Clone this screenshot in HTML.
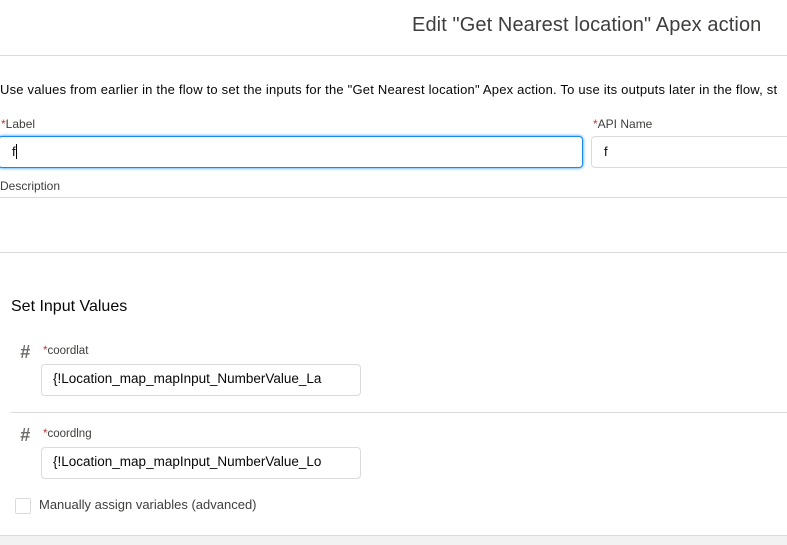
<!DOCTYPE html>
<html><head><style>
body{margin:0;width:787px;height:544px;overflow:hidden;background:#fff;font-family:"Liberation Sans",sans-serif;color:#16325c;position:relative}
.a{position:absolute;white-space:nowrap}
.in{position:absolute;border:1px solid #dddbda;border-radius:4px;background:#fff;box-sizing:border-box}
.lab{font-size:12px;color:#3e3e3c}
.r{color:#c23934}
</style></head><body>
<div class="a" style="left:412px;top:14px;font-size:20px;color:#3e3e3c;letter-spacing:0.1px">Edit "Get Nearest location" Apex action</div>
<div class="a" style="left:0;top:55px;width:787px;height:1px;background:#dddbda"></div>
<div class="a" style="left:0;top:82px;font-size:13px;color:#080707;letter-spacing:0.2px">Use values from earlier in the flow to set the inputs for the "Get Nearest location" Apex action. To use its outputs later in the flow, st</div>
<div class="a lab" style="left:1px;top:117px"><span class="r">*</span>Label</div>
<div class="in" style="left:-2px;top:136px;width:585px;height:32px;border:1px solid #1589ee;box-shadow:0 0 3px #1589ee"></div>
<div class="a" style="left:12px;top:144px;font-size:13px;color:#080707">f<span style="display:inline-block;width:1px;height:15px;background:#000;vertical-align:-3px"></span></div>
<div class="a lab" style="left:593px;top:117px"><span class="r">*</span>API Name</div>
<div class="in" style="left:591px;top:136px;width:210px;height:32px"></div>
<div class="a" style="left:604px;top:144px;font-size:13px;color:#080707">f</div>
<div class="a lab" style="left:0;top:179px">Description</div>
<div class="in" style="left:-4px;top:197px;width:805px;height:56px"></div>
<div class="a" style="left:11px;top:298px;font-size:16px;color:#080707">Set Input Values</div>
<div class="a" style="left:20px;top:342px;font-size:18px;color:#706e6b;font-weight:bold;font-style:italic">#</div>
<div class="a lab" style="left:43px;top:345px;font-size:11.5px"><span class="r">*</span>coordlat</div>
<div class="in" style="left:41px;top:364px;width:320px;height:32px"></div>
<div class="a" style="left:53px;top:371px;font-size:13.5px;width:275px;overflow:hidden;color:#080707">{!Location_map_mapInput_NumberValue_La</div>
<div class="a" style="left:11px;top:412px;width:776px;height:1px;background:#dddbda"></div>
<div class="a" style="left:20px;top:425px;font-size:18px;color:#706e6b;font-weight:bold;font-style:italic">#</div>
<div class="a lab" style="left:43px;top:428px;font-size:11.5px"><span class="r">*</span>coordlng</div>
<div class="in" style="left:41px;top:447px;width:320px;height:32px"></div>
<div class="a" style="left:53px;top:454px;font-size:13.5px;width:275px;overflow:hidden;color:#080707">{!Location_map_mapInput_NumberValue_Lo</div>
<div class="in" style="left:15px;top:498px;width:16px;height:16px;border-radius:2px"></div>
<div class="a" style="left:39px;top:497px;font-size:13px;color:#3e3e3c">Manually assign variables (advanced)</div>
<div class="a" style="left:0;top:535px;width:787px;height:9px;background:#f3f2f2;border-top:1px solid #dddbda"></div>
</body></html>
